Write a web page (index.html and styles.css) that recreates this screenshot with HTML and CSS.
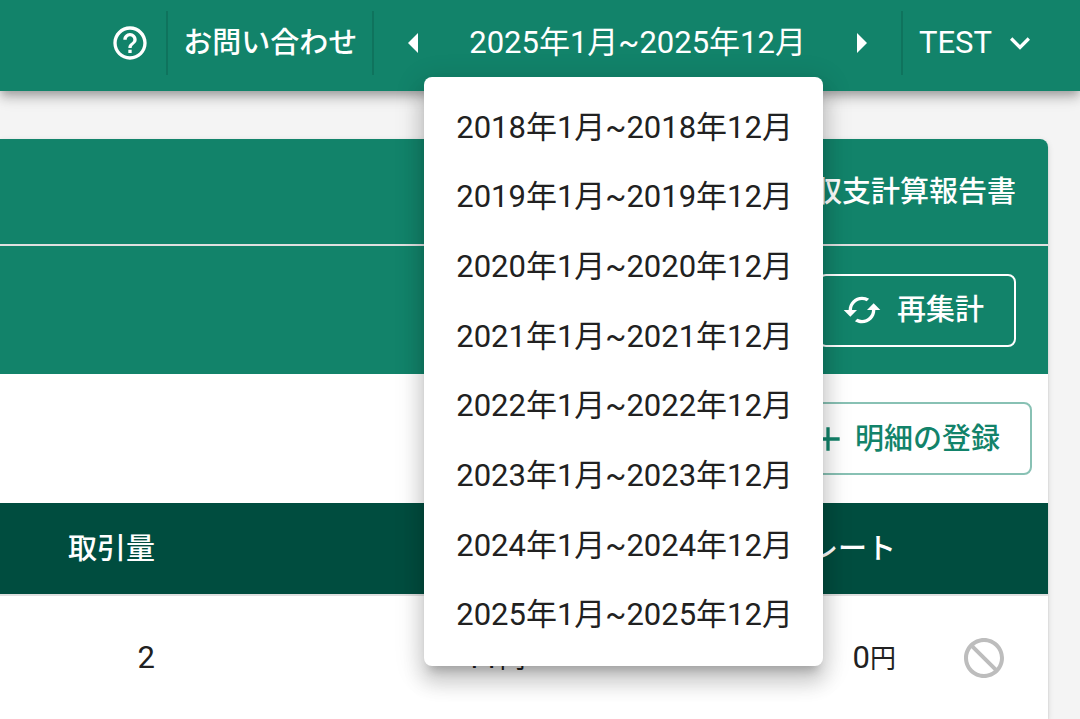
FILE: index.html
```html
<!DOCTYPE html>
<html lang="ja">
<head>
  <meta charset="UTF-8" />
  <meta name="viewport" content="width=device-width, initial-scale=1.0"/>
  <title>収支計算報告書</title>
  <link rel="stylesheet" href="styles.css">
</head>
<body>
  <header class="app-bar">
    <button class="icon-btn help" aria-label="ヘルプ">
      <svg class="icon" viewBox="0 0 24 24"><path d="M11 18h2v-2h-2v2zm1-16C6.48 2 2 6.48 2 12s4.48 10 10 10 10-4.480 10-10S17.520 2 12 2zm0 18c-4.410 0-8-3.590-8-8s3.590-8 8-8 8 3.590 8 8-3.590 8-8 8zm0-14c-2.210 0-4 1.790-4 4h2c0-1.100.9-2 2-2s2 .9 2 2c0 2-3 1.750-3 5h2c0-2.250 3-2.500 3-5 0-2.210-1.790-4-4-4z"/></svg>
    </button>
    <a class="contact" href="#">お問い合わせ</a>

    <div class="period">
      <button class="icon-btn" aria-label="前の期間">
        <svg class="icon-lg" viewBox="0 0 24 24"><path d="M14 7l-5 5 5 5V7z"/></svg>
      </button>
      <button class="period-btn" aria-haspopup="menu" aria-expanded="true">2025年1月~2025年12月</button>
      <button class="icon-btn" aria-label="次の期間">
        <svg class="icon-lg" viewBox="0 0 24 24"><path d="M10 17l5-5-5-5v10z"/></svg>
      </button>

      <ul class="period-menu">
        <li><button>2018年1月~2018年12月</button></li>
        <li><button>2019年1月~2019年12月</button></li>
        <li><button>2020年1月~2020年12月</button></li>
        <li><button>2021年1月~2021年12月</button></li>
        <li><button>2022年1月~2022年12月</button></li>
        <li><button>2023年1月~2023年12月</button></li>
        <li><button>2024年1月~2024年12月</button></li>
        <li><button>2025年1月~2025年12月</button></li>
      </ul>
    </div>

    <button class="user">
      TEST
      <svg class="icon" viewBox="0 0 24 24"><path d="M16.590 8.590L12 13.170 7.410 8.590 6 10l6 6 6-6z"/></svg>
    </button>
  </header>

  <main class="card">
    <div class="card-title">
      <a href="#">収支計算報告書</a>
    </div>
    <div class="card-actions">
      <button class="outline-btn recalc">
        <svg class="icon" viewBox="0 0 24 24"><path d="M19 8l-4 4h3c0 3.310-2.690 6-6 6-1.010 0-1.970-.25-2.800-.7l-1.460 1.460C8.970 19.540 10.430 20 12 20c4.420 0 8-3.580 8-8h3l-4-4zM6 12c0-3.310 2.690-6 6-6 1.010 0 1.970.25 2.800.7l1.460-1.460C15.030 4.460 13.570 4 12 4c-4.420 0-8 3.580-8 8H1l4 4 4-4H6z"/></svg>
        再集計
      </button>
    </div>
    <div class="table-tools">
      <button class="outline-btn add">
        <svg class="icon" viewBox="0 0 24 24"><path d="M19 13h-6v6h-2v-6H5v-2h6V5h2v6h6v2z"/></svg>
        明細の登録
      </button>
    </div>

    <table class="details">
      <colgroup>
        <col class="col-amount">
        <col>
        <col>
        <col class="col-action">
      </colgroup>
      <thead>
        <tr>
          <th>取引量</th>
          <th></th>
          <th>レート</th>
          <th></th>
        </tr>
      </thead>
      <tbody>
        <tr>
          <td>2</td>
          <td>11<span class="unit">円</span></td>
          <td>0<span class="unit">円</span></td>
          <td class="action">
            <svg class="icon-lg" viewBox="0 0 24 24" role="img" aria-label="編集不可"><path d="M12 2C6.480 2 2 6.480 2 12s4.480 10 10 10 10-4.480 10-10S17.520 2 12 2zM4 12c0-1.850.63-3.550 1.690-4.900L16.900 18.310C15.550 19.370 13.850 20 12 20c-4.420 0-8-3.580-8-8zm14.310 4.900L7.100 5.690C8.450 4.630 10.150 4 12 4c4.420 0 8 3.580 8 8 0 1.850-.63 3.550-1.690 4.900z"/></svg>
          </td>
        </tr>
      </tbody>
    </table>
  </main>
</body>
</html>
```
FILE: styles.css
```css
* {
  box-sizing: border-box;
}

body {
  margin: 0;
  min-height: 100vh;
  display: flex;
  flex-direction: column;
  background: #f4f4f4;
  color: #212121;
  font-family: Roboto, "Noto Sans CJK JP", sans-serif;
  font-size: 31px;
  line-height: 44px;
  overflow-x: hidden;
}

button {
  display: flex;
  align-items: center;
  border: none;
  padding: 0;
  background: none;
  color: inherit;
  font: inherit;
  white-space: nowrap;
  cursor: pointer;
}

a {
  color: inherit;
  text-decoration: none;
}

svg {
  display: block;
  flex-shrink: 0;
  fill: currentColor;
}

.icon {
  width: 40px;
  height: 40px;
}

.icon-lg {
  width: 48px;
  height: 48px;
}

/* header */
.app-bar {
  position: relative;
  z-index: 10;
  display: flex;
  justify-content: flex-end;
  padding: 11px 40px 16px 0;
  background: #12836a;
  color: white;
  box-shadow: 0 4px 8px -2px rgba(0,0,0,0.2), 0 8px 10px rgba(0,0,0,0.14), 0 2px 20px rgba(0,0,0,0.12);
}

.help {
  margin-right: 16px;
}

.contact,
.period,
.user {
  display: flex;
  align-items: center;
  height: 64px;
  padding: 0 16px;
  border-left: 2px solid rgba(0,0,0,0.12);
}

.contact {
  padding: 0 15px;
  font-size: 29px;
  font-weight: 500;
}

.period {
  position: relative;
}

.period-btn {
  padding: 0 31px;
}

.user {
  gap: 8px;
  padding-right: 0;
}

.period-menu {
  position: absolute;
  top: 66px;
  left: 50px;
  height: 589px;
  display: flex;
  flex-direction: column;
  margin: 0;
  padding: 16px 0;
  list-style: none;
  background: white;
  color: #212121;
  border-radius: 8px;
  box-shadow: 0 10px 10px -6px rgba(0,0,0,0.2), 0 16px 20px 2px rgba(0,0,0,0.14), 0 6px 28px 4px rgba(0,0,0,0.12);
}

.period-menu li {
  flex: 1;
  display: flex;
}

.period-menu button {
  padding: 0 30px 0 32px;
}

/* report card */
.card {
  flex: 1;
  margin: 48px 32px 0 0;
  background: white;
  border-top-right-radius: 8px;
  box-shadow: 0 4px 2px -2px rgba(0,0,0,0.2), 0 2px 2px rgba(0,0,0,0.14), 0 2px 6px rgba(0,0,0,0.12);
}

.card-title,
.card-actions {
  display: flex;
  align-items: center;
  justify-content: flex-end;
  padding: 0 32px;
  background: #12836a;
  color: white;
}

.card-title {
  height: 107px;
  border-bottom: 2px solid #e0e0e0;
  border-top-right-radius: 8px;
  font-size: 29px;
  font-weight: 500;
}

.card-actions {
  height: 128px;
}

.table-tools {
  display: flex;
  align-items: center;
  justify-content: flex-end;
  height: 129px;
  padding: 0 16px;
}

.outline-btn {
  height: 73px;
  padding: 0 30px 0 22px;
  border: 2px solid currentColor;
  border-radius: 8px;
  font-size: 29px;
  font-weight: 500;
}

.recalc {
  gap: 15px;
}

.add {
  gap: 7px;
  color: #12836a;
  border-color: rgba(18,131,106,0.5);
}

/* detail table */
.details {
  width: 100%;
  table-layout: fixed;
  border-collapse: separate;
  border-spacing: 0;
}

.col-amount {
  width: 187px;
}

.col-action {
  width: 120px;
}

.details th,
.details td {
  padding: 0 32px;
  text-align: right;
  white-space: nowrap;
}

.details th {
  height: 93px;
  background: #004d3f;
  color: white;
  border-bottom: 2px solid #e0e0e0;
  font-size: 29px;
  font-weight: 500;
}

.details td {
  height: 124px;
}

.details .action {
  color: #bdbdbd;
}

.unit {
  font-size: 26px;
}
```
